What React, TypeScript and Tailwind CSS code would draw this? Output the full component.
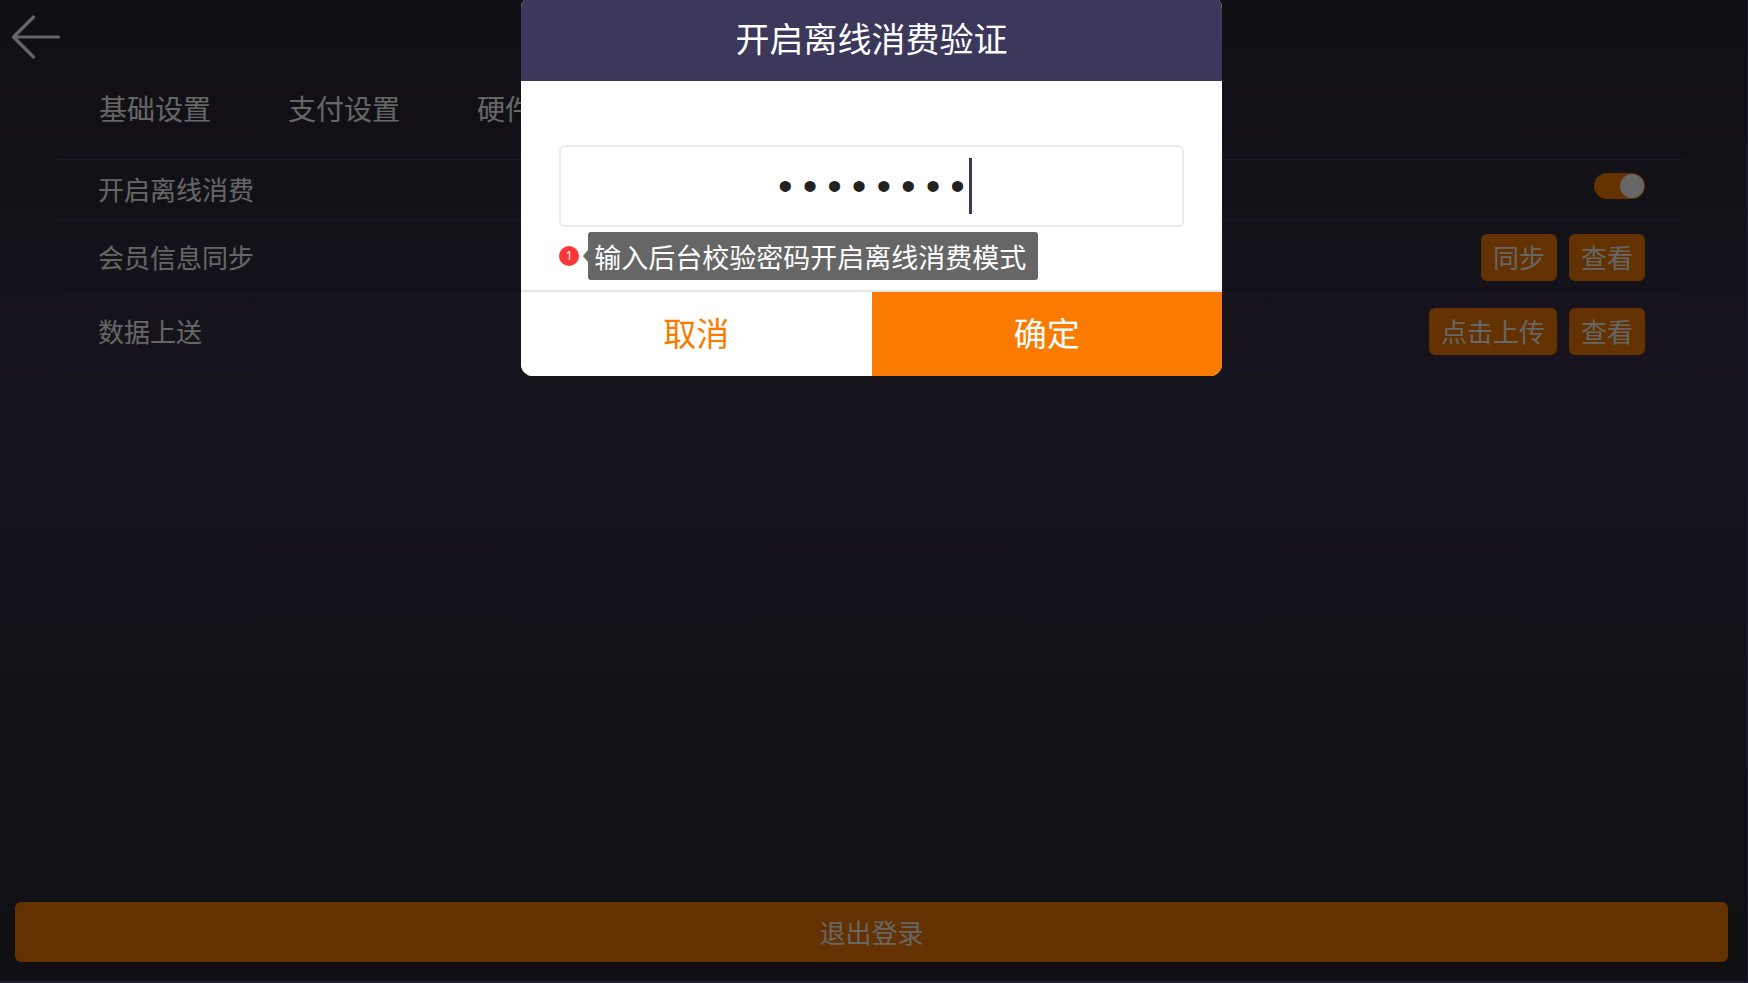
import { useState } from "react";
import type { ReactNode } from "react";

const tabs = ["基础设置", "支付设置", "硬件设置"];

function ActionButton({ children }: { children: ReactNode }) {
  return (
    <button type="button" className="h-[47px] rounded-md bg-[#fa7b00] px-3 pb-[2px] text-[26px] text-white">
      {children}
    </button>
  );
}

function Row({ label, children }: { label: ReactNode; children: ReactNode }) {
  return (
    <li className="flex items-center justify-between border-b border-[#38406a] px-[39px] py-[13px] text-[26px] leading-8">
      <div className="pb-[2px]">{label}</div>
      <div className="flex items-center gap-3">{children}</div>
    </li>
  );
}

function PasswordDialog() {
  const [password, setPassword] = useState("12345678");
  return (
    <form
      role="dialog"
      aria-labelledby="dialog-title"
      className="-mt-1 w-[40.2%] overflow-hidden rounded-xl bg-white"
      onSubmit={(e) => e.preventDefault()}
    >
      <h2
        id="dialog-title"
        className="flex h-[85px] items-center justify-center bg-[#3c385c] pb-[2px] text-[34px] text-white"
      >
        开启离线消费验证
      </h2>
      <div className="px-[38px] pt-16 pb-[10px]">
        <div className="relative">
          <input
            type="password"
            aria-labelledby="dialog-title"
            value={password}
            onChange={(e) => setPassword(e.target.value)}
            className="block h-[82px] w-full rounded-md border-2 border-[#ebebeb] bg-white pt-[6px] text-center font-['Liberation_Mono',monospace] text-[41px] text-[#222] outline-none"
          />
          <span className="absolute top-[13px] left-1/2 ml-[98px] h-14 w-[3px] bg-[#3c385c]" />
        </div>
        <div className="mt-[5px] flex items-center">
          <span className="flex size-5 items-center justify-center rounded-full bg-[#fb373a] font-['Noto_Sans',sans-serif] text-xs text-white">
            1
          </span>
          <svg className="ml-1 h-3 w-[5px]" viewBox="0 0 5 12" aria-hidden="true">
            <path d="M5 0v12L0 6z" fill="#666" />
          </svg>
          <p className="flex h-12 items-center rounded-[3px] bg-[#666] pt-[2px] pr-3 pl-[6px] text-[27px] whitespace-nowrap text-white">
            输入后台校验密码开启离线消费模式
          </p>
        </div>
      </div>
      <div className="flex h-[86px] border-t-2 border-[#e6e6e6] text-[33px]">
        <button type="button" className="flex-1 bg-white pb-[2px] text-[#fa7b00]">
          取消
        </button>
        <button type="submit" className="flex-1 bg-[#fa7b00] pb-[2px] text-white">
          确定
        </button>
      </div>
    </form>
  );
}

export default function App() {
  const [offline, setOffline] = useState(true);
  return (
    <div className="flex min-h-screen bg-[#1e1d35] pr-px pb-[2px] font-['Noto_Sans_CJK_SC',sans-serif]">
      <main className="relative flex flex-1 flex-col bg-linear-to-b from-[#292630] via-[#39324b] via-40% to-[#292630] pr-1 text-white">
        <header className="flex h-[74px] items-center px-[11px]">
          <button type="button" aria-label="返回">
            <svg className="h-12 w-[50px]" viewBox="0 0 50 48" fill="none" stroke="#fff" strokeWidth="3.200" strokeLinecap="round" strokeLinejoin="round">
              <path d="M47.500 24H2.500M22.500 4L2.500 24l20 20" />
            </svg>
          </button>
        </header>
        <nav className="flex h-[85px] items-start gap-[77px] px-[99px] pt-[14px] text-[28px] leading-10">
          {tabs.map((tab) => (
            <a key={tab} href="#">
              {tab}
            </a>
          ))}
        </nav>
        <ul className="mx-[59px] border-t border-[#38406a]">
          <Row label={<label htmlFor="offline">开启离线消费</label>}>
            <span className="relative flex">
              <input
                id="offline"
                type="checkbox"
                role="switch"
                checked={offline}
                onChange={(e) => setOffline(e.target.checked)}
                className="peer mb-2 h-[26px] w-[51px] appearance-none rounded-full bg-[#555] checked:bg-[#fa7b00]"
              />
              <span className="pointer-events-none absolute top-px left-px size-6 rounded-full bg-white peer-checked:right-px peer-checked:left-auto" />
            </span>
          </Row>
          <Row label={<span>会员信息同步</span>}>
            <ActionButton>同步</ActionButton>
            <ActionButton>查看</ActionButton>
          </Row>
          <Row label={<span>数据上送</span>}>
            <ActionButton>点击上传</ActionButton>
            <ActionButton>查看</ActionButton>
          </Row>
        </ul>
        <button type="button" className="mx-[15px] mt-auto mb-[19px] h-[60px] rounded-md bg-[#fa7b00] pb-[2px] text-[26px]">
          退出登录
        </button>
        <div className="absolute inset-0 flex items-start justify-center bg-black/60 pr-1">
          <PasswordDialog />
        </div>
      </main>
    </div>
  );
}
